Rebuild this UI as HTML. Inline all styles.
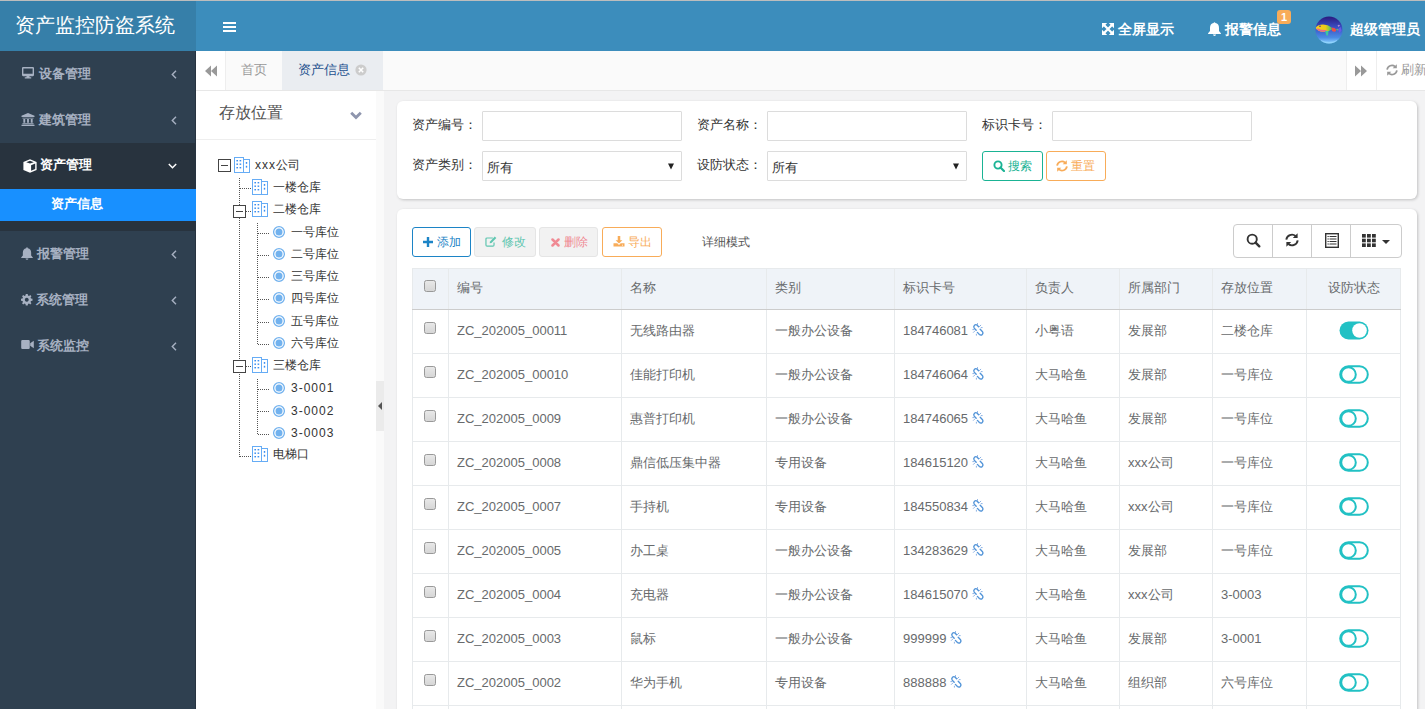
<!DOCTYPE html>
<html><head><meta charset="utf-8">
<style>
*{box-sizing:border-box;margin:0;padding:0}
html,body{width:1425px;height:709px;overflow:hidden}
body{position:relative;font-family:"Liberation Sans",sans-serif;font-size:13px;color:#676a6c;background:#f3f3f4}
.abs{position:absolute}
#topline{left:0;top:0;width:1425px;height:1px;background:#bdbdbd}
#logo{left:0;top:1px;width:196px;height:50px;background:#367fa9;color:#fff;font-size:20px;line-height:49px;padding-left:15px;white-space:nowrap}
#navbar{left:196px;top:1px;width:1229px;height:50px;background:#3c8dbc}
.hb{position:absolute;left:27px;width:13px;height:2px;background:#fff}
.navitem{position:absolute;top:3px;height:50px;line-height:50px;color:#fff;font-weight:bold;font-size:14px;white-space:nowrap}
#sidebar{left:0;top:51px;width:196px;height:658px;background:#2f4050;border-right:1px solid #273340}
.menu{position:absolute;left:0;width:195px;height:46px;line-height:46px;color:#a7b1c2;font-weight:bold;font-size:13px;white-space:nowrap}
.menu .ic{position:absolute}
.menu .tx{position:absolute;left:39px;top:0}
.menu .chev{position:absolute;left:171px;top:18px;width:8px;height:10px}
#tabbar{left:196px;top:51px;width:1229px;height:40px;background:#fafafa;border-bottom:1px solid #e7e7e7}
#content{left:196px;top:91px;width:1229px;height:618px;background:#f3f3f4}
#tree{left:196px;top:91px;width:180px;height:618px;background:#fff}
#strip{left:376px;top:91px;width:8px;height:618px;background:#fafafa}
.box{background:#fff;border-radius:6px;box-shadow:1px 1px 3px rgba(0,0,0,.2)}
#form{left:397px;top:101px;width:1020px;height:98px}
#tbox{left:397px;top:209px;width:1020px;height:520px}
.lbl{position:absolute;font-size:13px;color:#333;white-space:nowrap}
.inp{position:absolute;width:200px;height:30px;border:1px solid #dcdcdc;border-radius:1px;background:#fff}
.btn{position:absolute;height:30px;border:1px solid;border-radius:3px;font-size:12px;line-height:28px;white-space:nowrap;text-align:center}
table{border-collapse:collapse}
#tbl{table-layout:fixed;border-collapse:collapse}
#tbl td,#tbl th{border:1px solid #e7eaec;padding:0 8px 2px;text-align:left;font-weight:normal;color:#676a6c;font-size:13px;white-space:nowrap;overflow:hidden}
#tbl th{height:41px;background:#eff3f8;border-bottom:1px solid #ccc}
#tbl td{height:44px}
#tbl th:first-child,#tbl td:first-child{padding:0 0 2px;text-align:center}
#tbl th:last-child,#tbl td:last-child{text-align:center}
.cb{display:inline-block;width:12px;height:12px;border:1px solid #999;border-radius:2.5px;background:linear-gradient(#e8e8e8,#d6d6d6);vertical-align:middle;position:relative;top:-4px;left:-1px}
#tbl th .cb{top:-3px}
.lk{vertical-align:middle;position:relative;top:-2px}
.tg{vertical-align:middle;position:relative;top:0}
</style></head><body>
<div id="topline" class="abs"></div>
<div id="logo" class="abs">资产监控防盗系统</div>
<div id="navbar" class="abs">
  <div class="hb" style="top:21px"></div><div class="hb" style="top:25px"></div><div class="hb" style="top:29px"></div>
  <svg class="abs" style="left:906px;top:22px" width="12" height="12" viewBox="0 0 12 12"><path fill="#fff" d="M0 0H5.2L0 5.2ZM12 0V5.2L6.8 0ZM12 12H6.8L12 6.8ZM0 12V6.8L5.2 12Z"/><path d="M1.8 1.8L10.2 10.2M10.2 1.8L1.8 10.2" stroke="#fff" stroke-width="2.3"/></svg>
  <div class="navitem" style="left:922px">全屏显示</div>
  <svg class="abs" style="left:1012px;top:21px" width="13" height="14" viewBox="0 0 13 14"><path fill="#fff" d="M6.5 0.2Q7.3 0.2 7.4 1.1Q11 1.8 11 5.9V9.1L12.9 11.3V12H0.1V11.3L2 9.1V5.9Q2 1.8 5.6 1.1Q5.7 0.2 6.5 0.2ZM4.9 12.5H8.1Q7.9 13.9 6.5 13.9Q5.1 13.9 4.9 12.5Z"/></svg>
  <div class="navitem" style="left:1029px">报警信息</div>
  <div class="abs" style="left:1081px;top:9px;width:14px;height:14px;background:#f8ac59;border-radius:3px;color:#fff;font-weight:bold;font-size:11px;line-height:14px;text-align:center">1</div>
  <svg class="abs" style="left:1118.5px;top:14.5px" width="28" height="28" viewBox="0 0 28 28">
    <defs><linearGradient id="av" x1="0" y1="0" x2="0" y2="1"><stop offset="0" stop-color="#2a1a7e"/><stop offset="0.4" stop-color="#3a4fc4"/><stop offset="0.78" stop-color="#4a8ce4"/><stop offset="1" stop-color="#8fd4ff"/></linearGradient>
    <linearGradient id="fb" x1="0" y1="0" x2="1" y2="0"><stop offset="0" stop-color="#f5d020"/><stop offset="0.6" stop-color="#f0c818"/><stop offset="0.85" stop-color="#7cc84a"/><stop offset="1" stop-color="#38b880"/></linearGradient>
    <clipPath id="avc"><circle cx="14" cy="14" r="13.5"/></clipPath></defs>
    <circle cx="14" cy="14" r="13.5" fill="url(#av)"/>
    <g clip-path="url(#avc)">
      <path d="M0.8 11.5Q3 8.8 8 8.6Q13 8.6 16.5 11.5L17 13.5Q13 16 8 15.8Q3 15.5 0.8 12.5Z" fill="url(#fb)"/>
      <path d="M1.2 12.5Q3 15.5 8 15.8Q10 15.9 12 15.3L11 14Q6 14.2 3 12.5Z" fill="#ea6a8a"/>
      <path d="M10 15L13.5 15L13 19.5L11.5 19.5Z" fill="#3cc8a0"/>
      <path d="M16.5 11.5L19.5 12Q21.5 13 21 15Q19.5 16.5 17 15Z" fill="#ec4f48"/>
      <path d="M21 13.2L23.5 12.8L22.5 14.8Z" fill="#60c060"/>
      <path d="M23 13.5L25.5 11L26.5 14.5L24.5 17Z" fill="#6a5ae8"/>
      <path d="M22.5 9.5Q24 8 25 9.5L23.5 11Z" fill="#b08ad8"/>
      <circle cx="5" cy="10.3" r="0.8" fill="#4a2a9a"/>
      <path d="M6 24Q14 28 22 24L22 28H6Z" fill="#9ee0ff" opacity="0.5"/>
    </g>
  </svg>
  <div class="navitem" style="left:1154px">超级管理员</div>
</div>
<div id="sidebar" class="abs">
  <div class="menu" style="top:0">
    <svg class="ic" style="left:21px;top:16px" width="14" height="12" viewBox="0 0 14 13"><path fill="#a7b1c2" d="M0.5 1.2Q0.5 0 1.7 0H12.3Q13.5 0 13.5 1.2V8.8Q13.5 10 12.3 10H8.5L8.8 11.2H10.5V12.5H3.5V11.2H5.2L5.5 10H1.7Q0.5 10 0.5 8.8ZM2 1.5V7.2H12V1.5Z"/></svg>
    <span class="tx">设备管理</span>
    <svg class="chev" viewBox="0 0 6 9" style="left:171px;top:19px;width:6px;height:9px"><path d="M5 0.8L1.3 4.5L5 8.2" fill="none" stroke="#a7b1c2" stroke-width="1.4"/></svg>
  </div>
  <div class="menu" style="top:46px">
    <svg class="ic" style="left:21px;top:16px" width="14" height="13" viewBox="0 0 14 14"><path fill="#a7b1c2" d="M7 0L14 3V4.2H0V3ZM1 5H13V6H1ZM2 6.5H4V10.5H2ZM6 6.5H8V10.5H6ZM10 6.5H12V10.5H10ZM1 11H13V12.2H1ZM0 12.6H14V14H0Z"/></svg>
    <span class="tx">建筑管理</span>
    <svg class="chev" viewBox="0 0 6 9" style="left:171px;top:19px;width:6px;height:9px"><path d="M5 0.8L1.3 4.5L5 8.2" fill="none" stroke="#a7b1c2" stroke-width="1.4"/></svg>
  </div>
  <div id="activegrp" class="abs" style="left:0;top:92px;width:195px;height:88px;background:#28333e">
    <div class="menu" style="top:0;color:#fff">
      <svg class="ic" style="left:23px;top:16px" width="14" height="14" viewBox="0 0 14 14"><path fill="#fff" d="M7 0.3L13.6 3V11L7 13.7L0.4 11V3Z"/><path fill="#28333e" d="M3.2 3.2L7 1.8L10.8 3.2L7 4.6ZM8.1 6.3L12.2 4.6V10.1L8.1 11.8Z"/></svg>
      <span class="tx" style="left:40px;top:-1px">资产管理</span>
      <svg class="chev" viewBox="0 0 9 6" style="left:168px;top:20px;width:9px;height:6px"><path d="M0.8 1L4.5 4.7L8.2 1" fill="none" stroke="#fff" stroke-width="1.5"/></svg>
    </div>
    <div class="abs" style="left:0;top:46px;width:196px;height:32px;background:#1890ff;color:#fff;font-weight:bold;line-height:30px;padding-left:51px">资产信息</div>
  </div>
  <div class="menu" style="top:180px">
    <svg class="ic" style="left:21px;top:16px" width="12" height="13" viewBox="0 0 13 14"><path fill="#a7b1c2" d="M6.5 0.3Q7.3 0.3 7.4 1.2Q11 1.9 11 6V9.2L12.8 11.3V12H0.2V11.3L2 9.2V6Q2 1.9 5.6 1.2Q5.7 0.3 6.5 0.3ZM4.9 12.5H8.1Q7.9 13.9 6.5 13.9Q5.1 13.9 4.9 12.5Z"/></svg>
    <span class="tx" style="left:37px">报警管理</span>
    <svg class="chev" viewBox="0 0 6 9" style="left:171px;top:19px;width:6px;height:9px"><path d="M5 0.8L1.3 4.5L5 8.2" fill="none" stroke="#a7b1c2" stroke-width="1.4"/></svg>
  </div>
  <div class="menu" style="top:226px">
    <svg class="ic" style="left:21px;top:17px" width="11.5" height="11.5" viewBox="-6.5 -6.5 13 13"><path fill="#a7b1c2" fill-rule="evenodd" d="M-1.1 -6.5H1.1L1.4 -4.8L2.6 -4.3L4 -5.3L5.3 -4L4.3 -2.6L4.8 -1.4L6.5 -1.1V1.1L4.8 1.4L4.3 2.6L5.3 4L4 5.3L2.6 4.3L1.4 4.8L1.1 6.5H-1.1L-1.4 4.8L-2.6 4.3L-4 5.3L-5.3 4L-4.3 2.6L-4.8 1.4L-6.5 1.1V-1.1L-4.8 -1.4L-4.3 -2.6L-5.3 -4L-4 -5.3L-2.6 -4.3L-1.4 -4.8ZM0 -2.2A2.2 2.2 0 1 0 0.01 -2.2Z"/></svg>
    <span class="tx" style="left:36px">系统管理</span>
    <svg class="chev" viewBox="0 0 6 9" style="left:171px;top:19px;width:6px;height:9px"><path d="M5 0.8L1.3 4.5L5 8.2" fill="none" stroke="#a7b1c2" stroke-width="1.4"/></svg>
  </div>
  <div class="menu" style="top:272px">
    <svg class="ic" style="left:21px;top:17px" width="13" height="9" viewBox="0 0 14 10"><path fill="#a7b1c2" d="M0 1.3Q0 0 1.3 0H8.2Q9.5 0 9.5 1.3V8.7Q9.5 10 8.2 10H1.3Q0 10 0 8.7ZM10 3.5L14 0.8V9.2L10 6.5Z"/></svg>
    <span class="tx" style="left:37px">系统监控</span>
    <svg class="chev" viewBox="0 0 6 9" style="left:171px;top:19px;width:6px;height:9px"><path d="M5 0.8L1.3 4.5L5 8.2" fill="none" stroke="#a7b1c2" stroke-width="1.4"/></svg>
  </div>
</div>
<div id="tabbar" class="abs">
  <div class="abs" style="left:0;top:0;width:30px;height:39px;background:#fff;border-right:1px solid #eee">
    <svg class="abs" style="left:9px;top:14px" width="12" height="12" viewBox="0 0 12 12"><path fill="#999" d="M6 0.5V11.5L0 6ZM12 0.5V11.5L6 6Z"/></svg>
  </div>
  <div class="abs" style="left:30px;top:0;width:56px;height:39px;line-height:38px;color:#999;padding-left:15px">首页</div>
  <div class="abs" style="left:86px;top:0;width:101px;height:39px;line-height:38px;background:#eaedf1;color:#23508e;padding-left:16px">资产信息
    <svg class="abs" style="left:73px;top:13px" width="12" height="12" viewBox="0 0 12 12"><circle cx="6" cy="6" r="5.6" fill="#ccc"/><path d="M3.8 3.8L8.2 8.2M8.2 3.8L3.8 8.2" stroke="#fff" stroke-width="1.6"/></svg>
  </div>
  <div class="abs" style="left:1150px;top:0;width:31px;height:39px;background:#fff;border-left:1px solid #eee;border-right:1px solid #eee">
    <svg class="abs" style="left:8px;top:14px" width="12" height="12" viewBox="0 0 12 12"><path fill="#999" d="M0 0.5V11.5L6 6ZM6 0.5V11.5L12 6Z"/></svg>
  </div>
  <div class="abs" style="left:1181px;top:0;width:48px;height:39px;background:#fff;line-height:38px;color:#999;padding-left:24px;white-space:nowrap">
    <svg class="abs" style="left:9px;top:13px" width="12" height="12" viewBox="0 0 14 14"><g fill="none" stroke="#999" stroke-width="2"><path d="M1.3 6.6A5.7 5.7 0 0 1 10.6 3"/><path d="M12.7 7.4A5.7 5.7 0 0 1 3.4 11"/></g><path d="M7.8 5H12.6V0.2Z" fill="#999"/><path d="M6.2 9H1.4V13.8Z" fill="#999"/></svg>刷新
  </div>
</div>
<div id="content" class="abs"></div>
<div id="tree" class="abs"><div class="abs" style="left:23px;top:10px;font-size:16px;line-height:24px;color:#555">存放位置</div><svg class="abs" style="left:154px;top:20px" width="12" height="9" viewBox="0 0 12 9"><path d="M1.2 1.8L6 6.6L10.8 1.8" fill="none" stroke="#8e95ad" stroke-width="2.8"/></svg><div class="abs" style="left:0;top:48px;width:180px;height:1px;background:#eee"></div><div class="abs" style="left:22px;top:68px;width:13px;height:13px;border:1px solid #444;background:#fff"><div class="abs" style="left:2px;top:5px;width:7px;height:1px;background:#444"></div></div><svg class="abs" style="left:38px;top:66px" width="16" height="16" viewBox="0 0 16 16"><g fill="none" stroke="#66acf5" stroke-width="1"><rect x="0.5" y="0.5" width="9" height="15"/><rect x="9.5" y="2.5" width="6" height="13"/></g><g fill="#3a8ef0"><rect x="2.4" y="3" width="1.6" height="1.4"/><rect x="5.6" y="3" width="1.6" height="1.4"/><rect x="2.4" y="6.5" width="1.6" height="1.4"/><rect x="5.6" y="6.5" width="1.6" height="1.4"/><rect x="2.4" y="10" width="1.6" height="1.4"/><rect x="5.6" y="10" width="1.6" height="1.4"/><rect x="11.8" y="5" width="1.4" height="1.8"/><rect x="11.8" y="8.8" width="1.4" height="1.8"/></g></svg><div class="abs" style="left:59px;top:65px;height:18px;line-height:18px;font-size:12px;color:#333;white-space:nowrap"><span style="letter-spacing:1px">xxx</span>公司</div><div class="abs" style="left:43px;top:87px;width:1px;height:279px;background:repeating-linear-gradient(to bottom,#555 0,#555 1px,transparent 1px,transparent 2px)"></div><div class="abs" style="left:44px;top:97px;width:11px;height:1px;background:repeating-linear-gradient(to right,#555 0,#555 1px,transparent 1px,transparent 2px)"></div><svg class="abs" style="left:56px;top:88px" width="16" height="16" viewBox="0 0 16 16"><g fill="none" stroke="#66acf5" stroke-width="1"><rect x="0.5" y="0.5" width="9" height="15"/><rect x="9.5" y="2.5" width="6" height="13"/></g><g fill="#3a8ef0"><rect x="2.4" y="3" width="1.6" height="1.4"/><rect x="5.6" y="3" width="1.6" height="1.4"/><rect x="2.4" y="6.5" width="1.6" height="1.4"/><rect x="5.6" y="6.5" width="1.6" height="1.4"/><rect x="2.4" y="10" width="1.6" height="1.4"/><rect x="5.6" y="10" width="1.6" height="1.4"/><rect x="11.8" y="5" width="1.4" height="1.8"/><rect x="11.8" y="8.8" width="1.4" height="1.8"/></g></svg><div class="abs" style="left:77px;top:87px;height:18px;line-height:18px;font-size:12px;color:#333;white-space:nowrap">一楼仓库</div><div class="abs" style="left:37px;top:114px;width:13px;height:13px;border:1px solid #444;background:#fff"><div class="abs" style="left:2px;top:5px;width:7px;height:1px;background:#444"></div></div><div class="abs" style="left:50px;top:120px;width:6px;height:1px;background:repeating-linear-gradient(to right,#555 0,#555 1px,transparent 1px,transparent 2px)"></div><svg class="abs" style="left:56px;top:110px" width="16" height="16" viewBox="0 0 16 16"><g fill="none" stroke="#66acf5" stroke-width="1"><rect x="0.5" y="0.5" width="9" height="15"/><rect x="9.5" y="2.5" width="6" height="13"/></g><g fill="#3a8ef0"><rect x="2.4" y="3" width="1.6" height="1.4"/><rect x="5.6" y="3" width="1.6" height="1.4"/><rect x="2.4" y="6.5" width="1.6" height="1.4"/><rect x="5.6" y="6.5" width="1.6" height="1.4"/><rect x="2.4" y="10" width="1.6" height="1.4"/><rect x="5.6" y="10" width="1.6" height="1.4"/><rect x="11.8" y="5" width="1.4" height="1.8"/><rect x="11.8" y="8.8" width="1.4" height="1.8"/></g></svg><div class="abs" style="left:77px;top:109px;height:18px;line-height:18px;font-size:12px;color:#333;white-space:nowrap">二楼仓库</div><div class="abs" style="left:37px;top:269px;width:13px;height:13px;border:1px solid #444;background:#fff"><div class="abs" style="left:2px;top:5px;width:7px;height:1px;background:#444"></div></div><div class="abs" style="left:50px;top:275px;width:6px;height:1px;background:repeating-linear-gradient(to right,#555 0,#555 1px,transparent 1px,transparent 2px)"></div><svg class="abs" style="left:56px;top:266px" width="16" height="16" viewBox="0 0 16 16"><g fill="none" stroke="#66acf5" stroke-width="1"><rect x="0.5" y="0.5" width="9" height="15"/><rect x="9.5" y="2.5" width="6" height="13"/></g><g fill="#3a8ef0"><rect x="2.4" y="3" width="1.6" height="1.4"/><rect x="5.6" y="3" width="1.6" height="1.4"/><rect x="2.4" y="6.5" width="1.6" height="1.4"/><rect x="5.6" y="6.5" width="1.6" height="1.4"/><rect x="2.4" y="10" width="1.6" height="1.4"/><rect x="5.6" y="10" width="1.6" height="1.4"/><rect x="11.8" y="5" width="1.4" height="1.8"/><rect x="11.8" y="8.8" width="1.4" height="1.8"/></g></svg><div class="abs" style="left:77px;top:265px;height:18px;line-height:18px;font-size:12px;color:#333;white-space:nowrap">三楼仓库</div><div class="abs" style="left:44px;top:365px;width:11px;height:1px;background:repeating-linear-gradient(to right,#555 0,#555 1px,transparent 1px,transparent 2px)"></div><svg class="abs" style="left:56px;top:355px" width="16" height="16" viewBox="0 0 16 16"><g fill="none" stroke="#66acf5" stroke-width="1"><rect x="0.5" y="0.5" width="9" height="15"/><rect x="9.5" y="2.5" width="6" height="13"/></g><g fill="#3a8ef0"><rect x="2.4" y="3" width="1.6" height="1.4"/><rect x="5.6" y="3" width="1.6" height="1.4"/><rect x="2.4" y="6.5" width="1.6" height="1.4"/><rect x="5.6" y="6.5" width="1.6" height="1.4"/><rect x="2.4" y="10" width="1.6" height="1.4"/><rect x="5.6" y="10" width="1.6" height="1.4"/><rect x="11.8" y="5" width="1.4" height="1.8"/><rect x="11.8" y="8.8" width="1.4" height="1.8"/></g></svg><div class="abs" style="left:77px;top:354px;height:18px;line-height:18px;font-size:12px;color:#333;white-space:nowrap">电梯口</div><div class="abs" style="left:61px;top:132px;width:1px;height:122px;background:repeating-linear-gradient(to bottom,#555 0,#555 1px,transparent 1px,transparent 2px)"></div><div class="abs" style="left:62px;top:142px;width:11px;height:1px;background:repeating-linear-gradient(to right,#555 0,#555 1px,transparent 1px,transparent 2px)"></div><svg class="abs" style="left:76px;top:134px" width="14" height="14" viewBox="0 0 14 14"><circle cx="7" cy="7" r="5.4" fill="none" stroke="#72b2ee" stroke-width="1.3"/><circle cx="7" cy="7" r="3.5" fill="#72b2ee"/></svg><div class="abs" style="left:95px;top:132px;height:18px;line-height:18px;font-size:12px;color:#333;white-space:nowrap">一号库位</div><div class="abs" style="left:62px;top:164px;width:11px;height:1px;background:repeating-linear-gradient(to right,#555 0,#555 1px,transparent 1px,transparent 2px)"></div><svg class="abs" style="left:76px;top:156px" width="14" height="14" viewBox="0 0 14 14"><circle cx="7" cy="7" r="5.4" fill="none" stroke="#72b2ee" stroke-width="1.3"/><circle cx="7" cy="7" r="3.5" fill="#72b2ee"/></svg><div class="abs" style="left:95px;top:154px;height:18px;line-height:18px;font-size:12px;color:#333;white-space:nowrap">二号库位</div><div class="abs" style="left:62px;top:186px;width:11px;height:1px;background:repeating-linear-gradient(to right,#555 0,#555 1px,transparent 1px,transparent 2px)"></div><svg class="abs" style="left:76px;top:178px" width="14" height="14" viewBox="0 0 14 14"><circle cx="7" cy="7" r="5.4" fill="none" stroke="#72b2ee" stroke-width="1.3"/><circle cx="7" cy="7" r="3.5" fill="#72b2ee"/></svg><div class="abs" style="left:95px;top:176px;height:18px;line-height:18px;font-size:12px;color:#333;white-space:nowrap">三号库位</div><div class="abs" style="left:62px;top:208px;width:11px;height:1px;background:repeating-linear-gradient(to right,#555 0,#555 1px,transparent 1px,transparent 2px)"></div><svg class="abs" style="left:76px;top:200px" width="14" height="14" viewBox="0 0 14 14"><circle cx="7" cy="7" r="5.4" fill="none" stroke="#72b2ee" stroke-width="1.3"/><circle cx="7" cy="7" r="3.5" fill="#72b2ee"/></svg><div class="abs" style="left:95px;top:198px;height:18px;line-height:18px;font-size:12px;color:#333;white-space:nowrap">四号库位</div><div class="abs" style="left:62px;top:231px;width:11px;height:1px;background:repeating-linear-gradient(to right,#555 0,#555 1px,transparent 1px,transparent 2px)"></div><svg class="abs" style="left:76px;top:223px" width="14" height="14" viewBox="0 0 14 14"><circle cx="7" cy="7" r="5.4" fill="none" stroke="#72b2ee" stroke-width="1.3"/><circle cx="7" cy="7" r="3.5" fill="#72b2ee"/></svg><div class="abs" style="left:95px;top:221px;height:18px;line-height:18px;font-size:12px;color:#333;white-space:nowrap">五号库位</div><div class="abs" style="left:62px;top:253px;width:11px;height:1px;background:repeating-linear-gradient(to right,#555 0,#555 1px,transparent 1px,transparent 2px)"></div><svg class="abs" style="left:76px;top:245px" width="14" height="14" viewBox="0 0 14 14"><circle cx="7" cy="7" r="5.4" fill="none" stroke="#72b2ee" stroke-width="1.3"/><circle cx="7" cy="7" r="3.5" fill="#72b2ee"/></svg><div class="abs" style="left:95px;top:243px;height:18px;line-height:18px;font-size:12px;color:#333;white-space:nowrap">六号库位</div><div class="abs" style="left:61px;top:288px;width:1px;height:56px;background:repeating-linear-gradient(to bottom,#555 0,#555 1px,transparent 1px,transparent 2px)"></div><div class="abs" style="left:62px;top:298px;width:11px;height:1px;background:repeating-linear-gradient(to right,#555 0,#555 1px,transparent 1px,transparent 2px)"></div><svg class="abs" style="left:76px;top:290px" width="14" height="14" viewBox="0 0 14 14"><circle cx="7" cy="7" r="5.4" fill="none" stroke="#72b2ee" stroke-width="1.3"/><circle cx="7" cy="7" r="3.5" fill="#72b2ee"/></svg><div class="abs" style="left:95px;top:288px;height:18px;line-height:18px;font-size:12px;color:#333;white-space:nowrap;letter-spacing:1px">3-0001</div><div class="abs" style="left:62px;top:320px;width:11px;height:1px;background:repeating-linear-gradient(to right,#555 0,#555 1px,transparent 1px,transparent 2px)"></div><svg class="abs" style="left:76px;top:313px" width="14" height="14" viewBox="0 0 14 14"><circle cx="7" cy="7" r="5.4" fill="none" stroke="#72b2ee" stroke-width="1.3"/><circle cx="7" cy="7" r="3.5" fill="#72b2ee"/></svg><div class="abs" style="left:95px;top:311px;height:18px;line-height:18px;font-size:12px;color:#333;white-space:nowrap;letter-spacing:1px">3-0002</div><div class="abs" style="left:62px;top:343px;width:11px;height:1px;background:repeating-linear-gradient(to right,#555 0,#555 1px,transparent 1px,transparent 2px)"></div><svg class="abs" style="left:76px;top:335px" width="14" height="14" viewBox="0 0 14 14"><circle cx="7" cy="7" r="5.4" fill="none" stroke="#72b2ee" stroke-width="1.3"/><circle cx="7" cy="7" r="3.5" fill="#72b2ee"/></svg><div class="abs" style="left:95px;top:333px;height:18px;line-height:18px;font-size:12px;color:#333;white-space:nowrap;letter-spacing:1px">3-0003</div></div>
<div id="strip" class="abs"><div class="abs" style="left:0;top:290px;width:8px;height:50px;background:#ebebeb"><svg class="abs" style="left:2px;top:21px" width="4" height="8" viewBox="0 0 4 8"><path d="M4 0V8L0 4Z" fill="#555"/></svg></div></div>
<div id="form" class="abs box">
  <div class="lbl" style="left:15px;top:15px;line-height:18px">资产编号：</div><div class="inp" style="left:85px;top:10px"></div>
  <div class="lbl" style="left:300px;top:15px;line-height:18px">资产名称：</div><div class="inp" style="left:370px;top:10px"></div>
  <div class="lbl" style="left:585px;top:15px;line-height:18px">标识卡号：</div><div class="inp" style="left:655px;top:10px"></div>
  <div class="lbl" style="left:15px;top:55px;line-height:18px">资产类别：</div><div class="inp" style="left:85px;top:50px;color:#333;padding-left:4px;line-height:32px">所有<svg class="abs" style="right:7px;top:11px" width="6" height="7" viewBox="0 0 6 7"><path d="M0 0.5H6L3 6.5Z" fill="#222"/></svg></div>
  <div class="lbl" style="left:300px;top:55px;line-height:18px">设防状态：</div><div class="inp" style="left:370px;top:50px;color:#333;padding-left:4px;line-height:32px">所有<svg class="abs" style="right:7px;top:11px" width="6" height="7" viewBox="0 0 6 7"><path d="M0 0.5H6L3 6.5Z" fill="#222"/></svg></div>
  <div class="btn" style="left:585px;top:50px;width:61px;border-color:#1ab394;color:#1ab394;padding-left:14px">
    <svg class="abs" style="left:10px;top:8px" width="12" height="12" viewBox="0 0 12 12"><circle cx="5" cy="5" r="3.6" fill="none" stroke="#1ab394" stroke-width="1.9"/><path d="M7.5 7.5L11 11" stroke="#1ab394" stroke-width="2.2" stroke-linecap="round"/></svg>搜索</div>
  <div class="btn" style="left:649px;top:50px;width:60px;border-color:#f8ac59;color:#f8ac59;padding-left:14px">
    <svg class="abs" style="left:9px;top:8px" width="12" height="12" viewBox="0 0 14 14"><g fill="none" stroke="#f8ac59" stroke-width="2.1"><path d="M1.3 6.6A5.7 5.7 0 0 1 10.6 3"/><path d="M12.7 7.4A5.7 5.7 0 0 1 3.4 11"/></g><path d="M7.8 5H12.6V0.2Z" fill="#f8ac59"/><path d="M6.2 9H1.4V13.8Z" fill="#f8ac59"/></svg>重置</div>
</div>
<div id="tbox" class="abs box">
  <div class="btn" style="left:15px;top:18px;width:59px;border-color:#1c84c6;color:#1c84c6;padding-left:14px"><svg class="abs" style="left:10px;top:9px" width="10" height="10" viewBox="0 0 10 10"><path d="M3.8 0H6.2V3.8H10V6.2H6.2V10H3.8V6.2H0V3.8H3.8Z" fill="#1c84c6"/></svg>添加</div>
  <div class="btn" style="left:77px;top:18px;width:62px;border-color:#e5e5e5;background:#f2f2f2;color:#5fc6b0;padding-left:17px"><svg class="abs" style="left:10px;top:8px" width="12" height="11" viewBox="0 0 13 12"><path d="M8.5 2.2H2.2Q1 2.2 1 3.4V9.8Q1 11 2.2 11H8.6Q9.8 11 9.8 9.8V7" fill="none" stroke="#5fc6b0" stroke-width="1.3"/><path d="M10.6 0.5L12.3 2.2L7 7.5L5 8L5.5 6Z" fill="#5fc6b0"/></svg>修改</div>
  <div class="btn" style="left:142px;top:18px;width:59px;border-color:#e5e5e5;background:#f2f2f2;color:#f08a94;padding-left:14px"><svg class="abs" style="left:11px;top:10px" width="9" height="9" viewBox="0 0 9 9"><path d="M1.5 1.5L7.5 7.5M7.5 1.5L1.5 7.5" stroke="#f08a94" stroke-width="2.5" stroke-linecap="round"/></svg>删除</div>
  <div class="btn" style="left:205px;top:18px;width:60px;border-color:#f8ac59;color:#f8ac59;padding-left:15px"><svg class="abs" style="left:10px;top:8px" width="12" height="11" viewBox="0 0 13 13"><path d="M5 0H8V5H10.5L6.5 9L2.5 5H5Z" fill="#f8ac59"/><path d="M0 8.5H4.5L6.5 10.5L8.5 8.5H13V12.5H0Z" fill="#f8ac59"/><rect x="10" y="10.3" width="1.2" height="1" fill="#fff"/></svg>导出</div>
  <div class="lbl" style="left:305px;top:24px;line-height:18px;color:#555;font-size:12px">详细模式</div>
  <div class="abs" style="left:836px;top:15px;width:169px;height:34px;border:1px solid #ccc;border-radius:4px">
    <div class="abs" style="left:38px;top:0;width:1px;height:32px;background:#ccc"></div>
    <div class="abs" style="left:77px;top:0;width:1px;height:32px;background:#ccc"></div>
    <div class="abs" style="left:116px;top:0;width:1px;height:32px;background:#ccc"></div>
    <svg class="abs" style="left:12px;top:8px" width="15" height="15" viewBox="0 0 15 15"><circle cx="6.2" cy="6.2" r="4.6" fill="none" stroke="#333" stroke-width="1.9"/><path d="M9.6 9.6L13.3 13.3" stroke="#333" stroke-width="2.4" stroke-linecap="round"/></svg>
    <svg class="abs" style="left:51px;top:8px" width="14" height="14" viewBox="0 0 14 14"><g fill="none" stroke="#333" stroke-width="1.9"><path d="M1.3 6.6A5.7 5.7 0 0 1 10.6 3"/><path d="M12.7 7.4A5.7 5.7 0 0 1 3.4 11"/></g><path d="M7.8 5H12.6V0.2Z" fill="#333"/><path d="M6.2 9H1.4V13.8Z" fill="#333"/></svg>
    <svg class="abs" style="left:91px;top:8px" width="14" height="15" viewBox="0 0 14 15"><rect x="0.7" y="0.7" width="12.6" height="13.6" fill="none" stroke="#333" stroke-width="1.4"/><path d="M2.5 3.5H11.5M2.5 6H11.5M2.5 8.5H11.5M2.5 11H11.5" stroke="#333" stroke-width="1.1"/><path d="M4.2 2.8V11.7" stroke="#fff" stroke-width="0.8"/></svg>
    <svg class="abs" style="left:128px;top:9px" width="14" height="13" viewBox="0 0 14 13"><g fill="#333"><rect x="0" y="0" width="3.8" height="3.6"/><rect x="5" y="0" width="3.8" height="3.6"/><rect x="10" y="0" width="3.8" height="3.6"/><rect x="0" y="4.7" width="3.8" height="3.6"/><rect x="5" y="4.7" width="3.8" height="3.6"/><rect x="10" y="4.7" width="3.8" height="3.6"/><rect x="0" y="9.4" width="3.8" height="3.6"/><rect x="5" y="9.4" width="3.8" height="3.6"/><rect x="10" y="9.4" width="3.8" height="3.6"/></g></svg>
    <svg class="abs" style="left:148px;top:15px" width="8" height="4" viewBox="0 0 8 4"><path d="M0 0H8L4 4Z" fill="#333"/></svg>
  </div>
  <table id="tbl" class="abs" style="left:15px;top:59px;width:988px"><tr class="th"><th style="width:36px"><span class="cb"></span></th><th style="width:173px">编号</th><th style="width:145px">名称</th><th style="width:128px">类别</th><th style="width:132px">标识卡号</th><th style="width:93px">负责人</th><th style="width:93px">所属部门</th><th style="width:94px">存放位置</th><th style="width:94px">设防状态</th></tr><tr><td><span class="cb"></span></td><td>ZC_202005_00011</td><td>无线路由器</td><td>一般办公设备</td><td>184746081 <svg class="lk" width="12" height="13" viewBox="0 0 12 13"><g fill="none" stroke="#5294d8" stroke-width="1.35" stroke-linecap="round"><path d="M4.2 7.3L2.2 5.2Q1.2 3.6 2.5 2.3Q3.8 1.1 5.2 2.2L6.6 3.8"/><path d="M8.2 6.3L10.3 8.4Q11.5 10 10.3 11.4Q8.9 12.7 7.4 11.5L5.4 9.4"/></g><g stroke="#7fa8e0" stroke-width="0.9" stroke-linecap="round"><path d="M7.4 3.6L8.8 2.2M5.5 0.5V1.5M9.2 4.6H10.2M1.4 9.4L2.8 8M0.8 6.6H2M4.4 11.2V12.2"/></g></svg></td><td>小粤语</td><td>发展部</td><td>二楼仓库</td><td><svg class="tg" width="30" height="19" viewBox="0 0 30 19"><rect x="0.5" y="0.5" width="29" height="18" rx="9" fill="#22c1c4"/><circle cx="20.5" cy="9.5" r="7.3" fill="#fff"/></svg></td></tr><tr><td><span class="cb"></span></td><td>ZC_202005_00010</td><td>佳能打印机</td><td>一般办公设备</td><td>184746064 <svg class="lk" width="12" height="13" viewBox="0 0 12 13"><g fill="none" stroke="#5294d8" stroke-width="1.35" stroke-linecap="round"><path d="M4.2 7.3L2.2 5.2Q1.2 3.6 2.5 2.3Q3.8 1.1 5.2 2.2L6.6 3.8"/><path d="M8.2 6.3L10.3 8.4Q11.5 10 10.3 11.4Q8.9 12.7 7.4 11.5L5.4 9.4"/></g><g stroke="#7fa8e0" stroke-width="0.9" stroke-linecap="round"><path d="M7.4 3.6L8.8 2.2M5.5 0.5V1.5M9.2 4.6H10.2M1.4 9.4L2.8 8M0.8 6.6H2M4.4 11.2V12.2"/></g></svg></td><td>大马哈鱼</td><td>发展部</td><td>一号库位</td><td><svg class="tg" width="30" height="19" viewBox="0 0 30 19"><rect x="1.2" y="1.2" width="27.6" height="16.6" rx="8.3" fill="#fff" stroke="#22c1c4" stroke-width="2"/><circle cx="9.5" cy="9.5" r="7.3" fill="#fff" stroke="#22c1c4" stroke-width="2"/></svg></td></tr><tr><td><span class="cb"></span></td><td>ZC_202005_0009</td><td>惠普打印机</td><td>一般办公设备</td><td>184746065 <svg class="lk" width="12" height="13" viewBox="0 0 12 13"><g fill="none" stroke="#5294d8" stroke-width="1.35" stroke-linecap="round"><path d="M4.2 7.3L2.2 5.2Q1.2 3.6 2.5 2.3Q3.8 1.1 5.2 2.2L6.6 3.8"/><path d="M8.2 6.3L10.3 8.4Q11.5 10 10.3 11.4Q8.9 12.7 7.4 11.5L5.4 9.4"/></g><g stroke="#7fa8e0" stroke-width="0.9" stroke-linecap="round"><path d="M7.4 3.6L8.8 2.2M5.5 0.5V1.5M9.2 4.6H10.2M1.4 9.4L2.8 8M0.8 6.6H2M4.4 11.2V12.2"/></g></svg></td><td>大马哈鱼</td><td>发展部</td><td>一号库位</td><td><svg class="tg" width="30" height="19" viewBox="0 0 30 19"><rect x="1.2" y="1.2" width="27.6" height="16.6" rx="8.3" fill="#fff" stroke="#22c1c4" stroke-width="2"/><circle cx="9.5" cy="9.5" r="7.3" fill="#fff" stroke="#22c1c4" stroke-width="2"/></svg></td></tr><tr><td><span class="cb"></span></td><td>ZC_202005_0008</td><td>鼎信低压集中器</td><td>专用设备</td><td>184615120 <svg class="lk" width="12" height="13" viewBox="0 0 12 13"><g fill="none" stroke="#5294d8" stroke-width="1.35" stroke-linecap="round"><path d="M4.2 7.3L2.2 5.2Q1.2 3.6 2.5 2.3Q3.8 1.1 5.2 2.2L6.6 3.8"/><path d="M8.2 6.3L10.3 8.4Q11.5 10 10.3 11.4Q8.9 12.7 7.4 11.5L5.4 9.4"/></g><g stroke="#7fa8e0" stroke-width="0.9" stroke-linecap="round"><path d="M7.4 3.6L8.8 2.2M5.5 0.5V1.5M9.2 4.6H10.2M1.4 9.4L2.8 8M0.8 6.6H2M4.4 11.2V12.2"/></g></svg></td><td>大马哈鱼</td><td>xxx公司</td><td>一号库位</td><td><svg class="tg" width="30" height="19" viewBox="0 0 30 19"><rect x="1.2" y="1.2" width="27.6" height="16.6" rx="8.3" fill="#fff" stroke="#22c1c4" stroke-width="2"/><circle cx="9.5" cy="9.5" r="7.3" fill="#fff" stroke="#22c1c4" stroke-width="2"/></svg></td></tr><tr><td><span class="cb"></span></td><td>ZC_202005_0007</td><td>手持机</td><td>专用设备</td><td>184550834 <svg class="lk" width="12" height="13" viewBox="0 0 12 13"><g fill="none" stroke="#5294d8" stroke-width="1.35" stroke-linecap="round"><path d="M4.2 7.3L2.2 5.2Q1.2 3.6 2.5 2.3Q3.8 1.1 5.2 2.2L6.6 3.8"/><path d="M8.2 6.3L10.3 8.4Q11.5 10 10.3 11.4Q8.9 12.7 7.4 11.5L5.4 9.4"/></g><g stroke="#7fa8e0" stroke-width="0.9" stroke-linecap="round"><path d="M7.4 3.6L8.8 2.2M5.5 0.5V1.5M9.2 4.6H10.2M1.4 9.4L2.8 8M0.8 6.6H2M4.4 11.2V12.2"/></g></svg></td><td>大马哈鱼</td><td>xxx公司</td><td>一号库位</td><td><svg class="tg" width="30" height="19" viewBox="0 0 30 19"><rect x="1.2" y="1.2" width="27.6" height="16.6" rx="8.3" fill="#fff" stroke="#22c1c4" stroke-width="2"/><circle cx="9.5" cy="9.5" r="7.3" fill="#fff" stroke="#22c1c4" stroke-width="2"/></svg></td></tr><tr><td><span class="cb"></span></td><td>ZC_202005_0005</td><td>办工桌</td><td>一般办公设备</td><td>134283629 <svg class="lk" width="12" height="13" viewBox="0 0 12 13"><g fill="none" stroke="#5294d8" stroke-width="1.35" stroke-linecap="round"><path d="M4.2 7.3L2.2 5.2Q1.2 3.6 2.5 2.3Q3.8 1.1 5.2 2.2L6.6 3.8"/><path d="M8.2 6.3L10.3 8.4Q11.5 10 10.3 11.4Q8.9 12.7 7.4 11.5L5.4 9.4"/></g><g stroke="#7fa8e0" stroke-width="0.9" stroke-linecap="round"><path d="M7.4 3.6L8.8 2.2M5.5 0.5V1.5M9.2 4.6H10.2M1.4 9.4L2.8 8M0.8 6.6H2M4.4 11.2V12.2"/></g></svg></td><td>大马哈鱼</td><td>发展部</td><td>一号库位</td><td><svg class="tg" width="30" height="19" viewBox="0 0 30 19"><rect x="1.2" y="1.2" width="27.6" height="16.6" rx="8.3" fill="#fff" stroke="#22c1c4" stroke-width="2"/><circle cx="9.5" cy="9.5" r="7.3" fill="#fff" stroke="#22c1c4" stroke-width="2"/></svg></td></tr><tr><td><span class="cb"></span></td><td>ZC_202005_0004</td><td>充电器</td><td>一般办公设备</td><td>184615070 <svg class="lk" width="12" height="13" viewBox="0 0 12 13"><g fill="none" stroke="#5294d8" stroke-width="1.35" stroke-linecap="round"><path d="M4.2 7.3L2.2 5.2Q1.2 3.6 2.5 2.3Q3.8 1.1 5.2 2.2L6.6 3.8"/><path d="M8.2 6.3L10.3 8.4Q11.5 10 10.3 11.4Q8.9 12.7 7.4 11.5L5.4 9.4"/></g><g stroke="#7fa8e0" stroke-width="0.9" stroke-linecap="round"><path d="M7.4 3.6L8.8 2.2M5.5 0.5V1.5M9.2 4.6H10.2M1.4 9.4L2.8 8M0.8 6.6H2M4.4 11.2V12.2"/></g></svg></td><td>大马哈鱼</td><td>xxx公司</td><td>3-0003</td><td><svg class="tg" width="30" height="19" viewBox="0 0 30 19"><rect x="1.2" y="1.2" width="27.6" height="16.6" rx="8.3" fill="#fff" stroke="#22c1c4" stroke-width="2"/><circle cx="9.5" cy="9.5" r="7.3" fill="#fff" stroke="#22c1c4" stroke-width="2"/></svg></td></tr><tr><td><span class="cb"></span></td><td>ZC_202005_0003</td><td>鼠标</td><td>一般办公设备</td><td>999999 <svg class="lk" width="12" height="13" viewBox="0 0 12 13"><g fill="none" stroke="#5294d8" stroke-width="1.35" stroke-linecap="round"><path d="M4.2 7.3L2.2 5.2Q1.2 3.6 2.5 2.3Q3.8 1.1 5.2 2.2L6.6 3.8"/><path d="M8.2 6.3L10.3 8.4Q11.5 10 10.3 11.4Q8.9 12.7 7.4 11.5L5.4 9.4"/></g><g stroke="#7fa8e0" stroke-width="0.9" stroke-linecap="round"><path d="M7.4 3.6L8.8 2.2M5.5 0.5V1.5M9.2 4.6H10.2M1.4 9.4L2.8 8M0.8 6.6H2M4.4 11.2V12.2"/></g></svg></td><td>大马哈鱼</td><td>发展部</td><td>3-0001</td><td><svg class="tg" width="30" height="19" viewBox="0 0 30 19"><rect x="1.2" y="1.2" width="27.6" height="16.6" rx="8.3" fill="#fff" stroke="#22c1c4" stroke-width="2"/><circle cx="9.5" cy="9.5" r="7.3" fill="#fff" stroke="#22c1c4" stroke-width="2"/></svg></td></tr><tr><td><span class="cb"></span></td><td>ZC_202005_0002</td><td>华为手机</td><td>专用设备</td><td>888888 <svg class="lk" width="12" height="13" viewBox="0 0 12 13"><g fill="none" stroke="#5294d8" stroke-width="1.35" stroke-linecap="round"><path d="M4.2 7.3L2.2 5.2Q1.2 3.6 2.5 2.3Q3.8 1.1 5.2 2.2L6.6 3.8"/><path d="M8.2 6.3L10.3 8.4Q11.5 10 10.3 11.4Q8.9 12.7 7.4 11.5L5.4 9.4"/></g><g stroke="#7fa8e0" stroke-width="0.9" stroke-linecap="round"><path d="M7.4 3.6L8.8 2.2M5.5 0.5V1.5M9.2 4.6H10.2M1.4 9.4L2.8 8M0.8 6.6H2M4.4 11.2V12.2"/></g></svg></td><td>大马哈鱼</td><td>组织部</td><td>六号库位</td><td><svg class="tg" width="30" height="19" viewBox="0 0 30 19"><rect x="1.2" y="1.2" width="27.6" height="16.6" rx="8.3" fill="#fff" stroke="#22c1c4" stroke-width="2"/><circle cx="9.5" cy="9.5" r="7.3" fill="#fff" stroke="#22c1c4" stroke-width="2"/></svg></td></tr><tr><td><span class="cb"></span></td><td>ZC_202005_0001</td><td></td><td></td><td></td><td></td><td></td><td></td><td></td></tr></table>
</div>
</body></html>
